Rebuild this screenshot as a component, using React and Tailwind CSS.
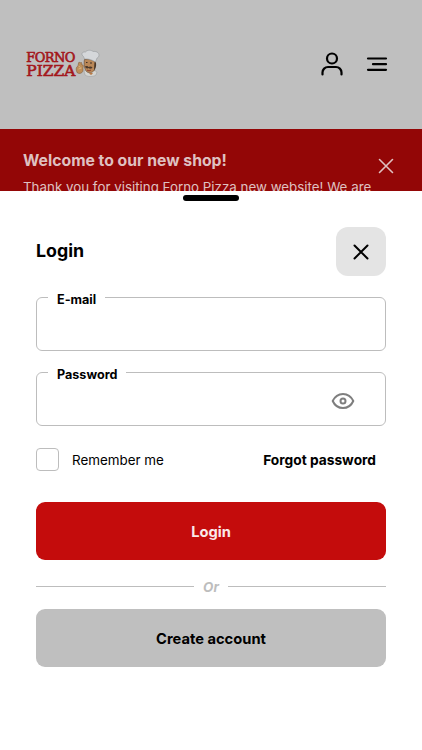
const Cross = ({ className, strokeWidth }) => (
  <svg className={className} viewBox="0 0 16 16" fill="none" stroke="currentColor" strokeWidth={strokeWidth} strokeLinecap="round">
    <path d="M1.5 1.5 14.5 14.5M14.5 1.5 1.5 14.5" />
  </svg>
);

const Logo = () => (
  <svg className="h-[28px] w-[76px] overflow-visible" viewBox="0 0 76 28" fontFamily="'DejaVu Serif', serif" fill="#a3161b" stroke="#a3161b" strokeWidth=".6">
    <text x="1.300" y="11.800" fontSize="13" textLength="49" lengthAdjust="spacing">FORNO</text>
    <text x="1.300" y="25.700" fontSize="14.6" textLength="49" lengthAdjust="spacingAndGlyphs">PIZZA</text>
    <path d="M59 21c3-2 9-2 13 1l-1 3c-3 2-8 2-11 0z" fill="#d5d5d2" stroke="#8c8e90" strokeWidth=".4" />
    <path d="M59.5 9.5c3-1 8 0 11 2.5l-1 8c-2 3-6 3.500-8 1.500-2-2-3-8-2-12z" fill="#b98757" stroke="#4c3929" strokeWidth=".5" />
    <path d="M59.500 9c-.5-1.500-1-3-2.500-4-.5-2 1-3.500 3.500-3 2-2.500 6-2 7.500-.5 3-.5 6 1 6 3.500 0 2-1 2.500-2 3l-1.500 4c-3-2-7-3.500-11-3z" fill="#d5d7da" stroke="#8d9094" strokeWidth=".5" />
    <path d="M69.500 12l1.500 1c.5 3-.5 6-2 7z" fill="#493628" stroke="none" />
    <path d="M60 16.500c2-1 3 0 3.500.5 1.500-1 3-.5 4 .5-1 1.500-3 1.500-4 .5-1 1-3 .5-3.500-1.500z" fill="#4d392b" stroke="none" />
    <path d="M61 12.500h1.500M65 13h2" stroke="#33271f" strokeWidth=".9" />
    <path d="M62 20c1.500 1 2.500 1 4 0" stroke="#862d24" fill="none" strokeWidth=".8" />
    <path d="M52.500 23c-2-3-1.500-6 .5-7l.5-3c0-1 1.500-1 1.500 0l1-.5c1 0 1 .5.500 2l1.500.5c1 1-.5 3 0 4 .5 3-2 5.500-5.500 4z" fill="#bd8e59" stroke="#765231" strokeWidth=".5" />
    <path d="M53.500 16l2 1.500M53.500 19l3-1" stroke="#e0bd88" strokeWidth=".8" />
    <path d="M64 23.500l2-1 2 1-2 1.500z" fill="#b77b48" stroke="none" />
  </svg>
);

const Field = ({ label, type, children }) => (
  <fieldset className="flex h-[61px] w-full rounded-[6px] border border-[#bdbdbd]">
    <legend className="ml-[11px] h-[15px] px-[9px] text-[12.6px] leading-[20px] font-bold">{label}</legend>
    <div className="flex h-[42px] w-full items-center pr-[30px] pl-5">
      <input type={type} aria-label={label} className="h-full min-w-0 flex-1 bg-transparent outline-none" />
      {children}
    </div>
  </fieldset>
);

export default function App() {
  return (
    <div className="flex h-[750px] w-full flex-col overflow-hidden bg-white font-['Inter',sans-serif] text-black">
      <header className="flex h-[129px] shrink-0 items-center justify-between bg-[#bfbfbf] pr-[34px] pb-px pl-[25px]">
        <Logo />
        <div className="flex items-center gap-[23px]">
          <svg className="h-6 w-[22px]" viewBox="0 0 22 24" fill="none" stroke="currentColor" strokeWidth="2.2" strokeLinecap="round">
            <circle cx="11" cy="6.500" r="5" />
            <path d="M1.500 22.500v-2a5.500 5.500 0 0 1 5.500-5.500h8a5.500 5.500 0 0 1 5.500 5.500v2" />
          </svg>
          <svg className="h-6 w-[22px]" viewBox="0 0 22 24" fill="none" stroke="currentColor" strokeWidth="2.2" strokeLinecap="round">
            <path d="M2 6.500h18M7 12.200h13M2 17.800h18" />
          </svg>
        </div>
      </header>
      <section className="flex h-[62px] shrink-0 justify-between overflow-hidden bg-[#930606] pr-[28px] pl-[23px] text-[#dfc1c1]">
        <div className="pt-[20px] whitespace-nowrap">
          <h2 className="text-[15.75px] leading-6 font-bold">Welcome to our new shop!</h2>
          <p className="mt-[3px] text-[13.35px] leading-[22px]">Thank you for visiting Forno Pizza new website! We are</p>
        </div>
        <Cross className="mt-[29px] size-4 shrink-0" strokeWidth="1.6" />
      </section>
      <main className="flex flex-1 flex-col bg-white px-[36px]">
        <div className="mt-[4px] h-[6px] w-[56px] shrink-0 self-center rounded-full bg-black" />
        <div className="mt-[26px] flex h-[49px] shrink-0 items-center justify-between">
          <h1 className="pb-[2px] text-[17.8px] leading-6 font-bold">Login</h1>
          <button aria-label="Close" className="flex h-[49px] w-[50px] items-center justify-center rounded-[12px] bg-[#e4e4e4]">
            <Cross className="mt-[1px] size-4" strokeWidth="2" />
          </button>
        </div>
        <div className="mt-[14px] flex flex-col gap-[14px]">
          <Field label="E-mail" type="email" />
          <Field label="Password" type="password">
            <svg className="h-[18px] w-[24px] shrink-0" viewBox="0 0 24 18" fill="none" stroke="#7e7e7e" strokeWidth="2">
              <path d="M1.700 9C4 4 7.700 1.900 12 1.900S20 4 22.300 9C20 14 16.300 16.100 12 16.100S4 14 1.700 9z" strokeLinejoin="round" />
              <circle cx="12" cy="9" r="2.500" />
            </svg>
          </Field>
        </div>
        <div className="mt-[22px] flex h-[23px] shrink-0 items-center justify-between pr-[10px]">
          <label className="flex items-center gap-[13px] text-[13.4px] leading-5">
            <input type="checkbox" className="size-[23px] appearance-none rounded-[4px] border border-[#bdbdbd]" />
            Remember me
          </label>
          <a href="#" className="text-[13.75px] leading-5 font-bold">Forgot password</a>
        </div>
        <button className="mt-[31px] h-[58px] shrink-0 rounded-[9px] bg-[#c40c0c] pt-[2px] text-[14.7px] font-bold text-[#fae9e9]">Login</button>
        <div className="mt-[16px] flex h-[21px] shrink-0 items-center gap-[9px] text-[#bdbdbd]">
          <span className="h-px flex-1 bg-[#bdbdbd]" />
          <span className="text-[13.4px] leading-5 font-bold italic">Or</span>
          <span className="h-px flex-1 bg-[#bdbdbd]" />
        </div>
        <button className="mt-[12px] h-[58px] shrink-0 rounded-[9px] bg-[#bfbfbf] pt-[2px] text-[14.7px] font-bold">Create account</button>
      </main>
    </div>
  );
}
